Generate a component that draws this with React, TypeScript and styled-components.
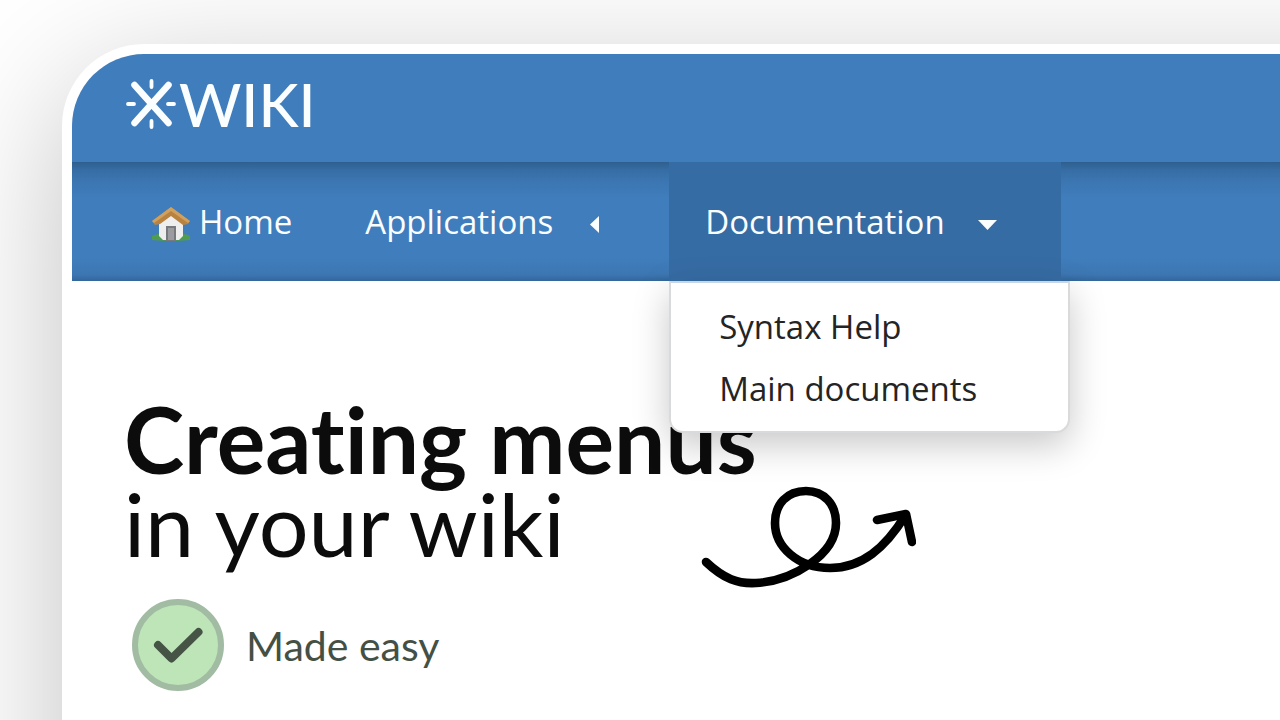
import React from "react";
import styled, { createGlobalStyle } from "styled-components";

const GlobalStyle = createGlobalStyle`
  *, *::before, *::after { box-sizing: border-box; }
  body { margin: 0; background: #ffffff; }
`;

const sans = `"Open Sans", "Noto Sans", sans-serif`;
const display = `Lato, "Open Sans", sans-serif`;

const Page = styled.div`
  height: 100vh;
  overflow: hidden;
  padding: 44px 0 0 62px;
  background: #ffffff;
  font-family: ${sans};
`;

const Frame = styled.div`
  min-height: 130vh;
  margin-right: -200px;
  padding: 10px 0 0 10px;
  border-radius: 82px 0 0 0;
  background: #ffffff;
  box-shadow: 0 36px 142px rgba(0, 0, 0, 0.25);
`;

const TopBar = styled.header`
  display: flex;
  align-items: center;
  height: 108px;
  padding: 0 53px 8px;
  border-top-left-radius: 72px;
  background: #407dbc;
`;

const Brand = styled.a`
  display: flex;
  align-items: center;
  gap: 2px;
  color: #fbfeff;
  font-family: ${display};
  font-size: 60px;
  font-weight: 500;
  line-height: 60px;
  text-decoration: none;
`;

const NavBar = styled.nav`
  display: flex;
  height: 119px;
  padding-left: 43px;
  background: linear-gradient(
    to bottom,
    #2f5f8f 0,
    #366da4 8px,
    #3c76b2 20px,
    #407dbc 36px,
    #407dbc 96px,
    #3d77b3 112px,
    #33679b 119px
  );
`;

const HomeLink = styled.a`
  display: flex;
  align-items: center;
  gap: 8px;
  padding: 0 37px 0 36px;
  color: #fbfeff;
  font-size: 33px;
  text-decoration: none;
`;

const MenuItem = styled.div`
  position: relative;
  display: flex;
`;

const MenuButton = styled.button<{ $open?: boolean }>`
  display: flex;
  align-items: center;
  gap: 32px;
  padding: 0 64px 0 36px;
  border: 0;
  background: ${(p) => (p.$open ? "#366ca4" : "transparent")};
  color: #fbfeff;
  font-family: inherit;
  font-size: 33px;
`;

const Dropdown = styled.div`
  position: absolute;
  z-index: 1;
  top: 100%;
  left: 0;
  width: 401px;
  padding: 13px 48px 11px;
  border: 2px solid #d9dadb;
  border-top-color: #c8d7e8;
  border-radius: 0 0 14px 14px;
  background: #ffffff;
  box-shadow: 0 12px 36px rgba(0, 0, 0, 0.22);
`;

const DropdownLink = styled.a`
  display: block;
  color: #242424;
  font-size: 33px;
  line-height: 62px;
  text-decoration: none;
  white-space: nowrap;
`;

const Content = styled.main`
  padding: 115px 52px 0;
`;

const Title = styled.h1`
  margin: 0;
  color: #0c0c0c;
  font-family: ${display};
  font-size: 88px;
  font-weight: 400;
  line-height: 85px;
  font-variant-ligatures: none;
`;

const Strong = styled.strong`
  display: block;
  font-size: 91px;
  font-weight: 700;
`;

const SecondLine = styled.span`
  display: flex;
  align-items: flex-start;
  gap: 135px;
`;

const Tagline = styled.p`
  display: flex;
  align-items: center;
  gap: 22px;
  margin: 10px 8px 0;
  color: #455045;
  font-family: ${display};
  font-size: 41px;
  font-weight: 400;
`;

const CheckMark = () => (
  <svg width="92" height="92" viewBox="0 0 92 92" fill="none" aria-hidden="true">
    <circle cx="46" cy="46" r="43" fill="#bde5b8" stroke="#a2bba3" strokeWidth="6" />
    <path d="M26 46L39.500 59.500L66.500 33" stroke="#465446" strokeWidth="8" strokeLinecap="round" strokeLinejoin="round" />
  </svg>
);

const LogoMark = () => (
  <svg width="52" height="52" viewBox="0 0 52 52" fill="none" stroke="#fbfeff" strokeLinecap="round" aria-hidden="true">
    <path d="M9.500 7L43.500 45M43.500 7L9.500 45" strokeWidth="6.500" />
    <path d="M26.500 3V9M26.500 43V49M3 26H9M43 26H49" strokeWidth="3.800" />
  </svg>
);

const House = () => (
  <svg width="40" height="40" viewBox="0 -4 40 40" aria-hidden="true">
    <path d="M1 30Q9 26 20 29Q32 26 39 30V34Q20 36 1 34Z" fill="#4f9b50" />
    <path d="M8 17L20 7L32 17V30L28 34H12L8 30Z" fill="#eeeeef" />
    <rect x="15" y="20" width="10" height="15" fill="#77797c" />
    <rect x="17" y="22" width="6" height="12" fill="#9a9c9f" />
    <path d="M20 1L1 15L4 19L9 18L20 10L32 19L37 18L39 15Z" fill="#b9833f" />
    <path d="M20 1L1 15L3 17L20 5L37 17L39 15Z" fill="#d0a05e" />
  </svg>
);

const CaretLeft = () => (
  <svg width="20" height="22" viewBox="0 0 20 22" fill="#fbfeff" aria-hidden="true">
    <path d="M14 5V22L5 13.500Z" />
  </svg>
);

const CaretDown = () => (
  <svg width="20" height="22" viewBox="0 0 20 22" fill="#fbfeff" aria-hidden="true">
    <path d="M1 9H20L10.500 19Z" />
  </svg>
);

const LoopArrow = () => (
  <svg width="216" height="108" viewBox="0 0 216 108" fill="none" stroke="#000000" strokeWidth="8.600" strokeLinecap="round" strokeLinejoin="round" aria-hidden="true">
    <path d="M6 81C24 98 38 103 56 102C92 100 136 74 136 42C136 23 124 10 106 10C87 10 75 23 75 42C75 66 98 87 130 87C162 87 185 67 205 35" />
    <path d="M177 39L206 33L212 61" />
  </svg>
);

export default function App() {
  return (
    <>
      <GlobalStyle />
      <Page>
        <Frame>
          <TopBar>
            <Brand href="#">
              <LogoMark />
              WIKI
            </Brand>
          </TopBar>
          <NavBar>
            <HomeLink href="#">
              <House />
              Home
            </HomeLink>
            <MenuItem>
              <MenuButton type="button">
                Applications
                <CaretLeft />
              </MenuButton>
            </MenuItem>
            <MenuItem>
              <MenuButton type="button" $open aria-expanded="true">
                Documentation
                <CaretDown />
              </MenuButton>
              <Dropdown>
                <DropdownLink href="#">Syntax Help</DropdownLink>
                <DropdownLink href="#">Main documents</DropdownLink>
              </Dropdown>
            </MenuItem>
          </NavBar>
          <Content>
            <Title>
              <Strong>Creating menus</Strong>
              <SecondLine>
                in your wiki
                <LoopArrow />
              </SecondLine>
            </Title>
            <Tagline>
              <CheckMark />
              Made easy
            </Tagline>
          </Content>
        </Frame>
      </Page>
    </>
  );
}
